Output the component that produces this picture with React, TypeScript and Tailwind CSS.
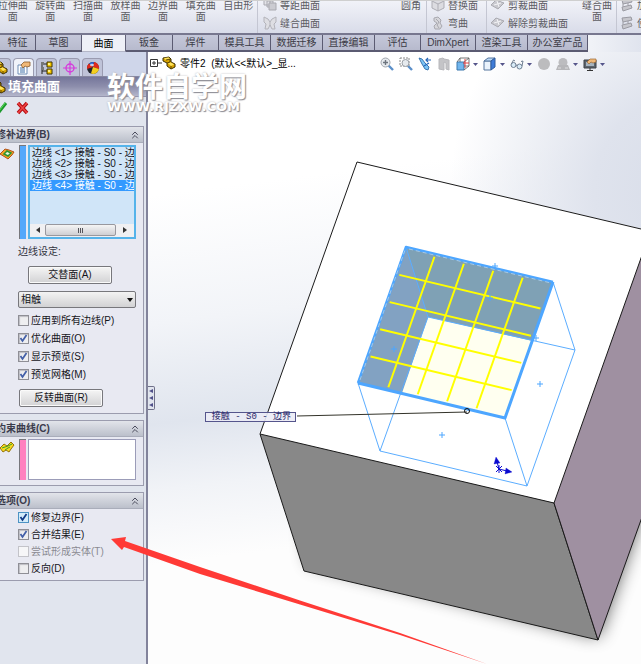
import { useState, type ReactNode } from "react";
import { ChevronsUp } from "lucide-react";
import clsx from "clsx";

const largeTools = [
  ["拉伸曲", "面"],
  ["旋转曲", "面"],
  ["扫描曲", "面"],
  ["放样曲", "面"],
  ["边界曲", "面"],
  ["填充曲", "面"],
  ["自由形", ""],
];

const commandTabs = [
  { label: "特征", width: "w-[36px]" },
  { label: "草图", width: "w-[46px]" },
  { label: "曲面", width: "w-[44px]" },
  { label: "钣金", width: "w-[47px]" },
  { label: "焊件", width: "w-[46px]" },
  { label: "模具工具", width: "w-[52px]" },
  { label: "数据迁移", width: "w-[52px]" },
  { label: "直接编辑", width: "w-[52px]" },
  { label: "评估", width: "w-[46px]" },
  { label: "DimXpert", width: "w-[55px]" },
  { label: "渲染工具", width: "w-[52px]" },
  { label: "办公室产品", width: "w-[60px]" },
];

const edges = [1, 2, 3, 4].map((n) => `边线 <${n}> 接触 - S0 - 边界`);

function SmallTool({ icon, label }: { icon: ReactNode; label: string }) {
  return (
    <button type="button" className="flex h-[18px] items-center gap-[3px] whitespace-nowrap">
      {icon}
      {label}
    </button>
  );
}

function OffsetIcon() {
  return (
    <svg viewBox="0 0 14 14" className="size-[14px] shrink-0" fill="#e3e3e8" stroke="#a9a9b0">
      <path d="M1 1h6v6H1zM4 3h6v6H4z" />
      <path d="M6 5h7v7H6z" fill="#cbcbd1" />
    </svg>
  );
}

function KnitIcon() {
  return (
    <svg viewBox="0 0 14 14" className="size-[14px] shrink-0" fill="#dedee3" stroke="#b3b3ba">
      <path d="M1 1l4 2 2 3 2-3 4-2v5l-2 2 1 5H9L7 9l-2 4H2l1-5-2-2z" />
      <path d="M7 6v4" />
    </svg>
  );
}

function ReplaceIcon() {
  return (
    <svg viewBox="0 0 14 14" className="size-[14px] shrink-0" fill="#dcdce1" stroke="#adadb4">
      <path d="M1 3l6-2 6 2v7l-6 3-6-3z" />
      <path d="M1 3l6 3 6-3M7 6v7" />
    </svg>
  );
}

function FlexIcon() {
  return (
    <svg viewBox="0 0 14 14" className="size-[14px] shrink-0" fill="#d6d6db" stroke="#a8a8af">
      <path d="M3 2l4-1 3 3-1 3 2 3-2 3H4l-1-3 3-3-3-2z" />
      <path d="M5 3l3 3-2 3 2 3" fill="none" />
    </svg>
  );
}

function TrimIcon() {
  return (
    <svg viewBox="0 0 14 14" className="size-[14px] shrink-0" fill="#c9c9cf" stroke="#aaaab1">
      <path d="M0 7l5-5 8 3-6 6z" />
      <path d="M3 7l7-2M6 3l2 6" stroke="#f3f3f6" />
    </svg>
  );
}

function ThickenIcon() {
  return (
    <svg viewBox="0 0 14 14" className="size-[14px] shrink-0" fill="#c6c6cc" stroke="#9a9aa2">
      <path d="M2 2l9-1 1 3-9 2zM2 9l9-2 1 3-9 3z" />
      <path d="M3 6v2M8 5v2" />
    </svg>
  );
}

function Ribbon() {
  return (
    <header className="flex h-[35px] shrink-0 overflow-hidden border-b-2 border-t border-b-[#77778f] border-t-[#cfcfcf] bg-linear-to-b from-[#f1f2f8] to-[#d9dce9] text-[10px] text-[#5d5d63]">
      <div className="-ml-[6px] -mt-px flex w-[263px] shrink-0">
        {largeTools.map(([first, second]) => (
          <button key={first} type="button" className="flex flex-1 flex-col items-center leading-[11px]">
            <span>{first}</span>
            <span>{second}</span>
          </button>
        ))}
      </div>
      <div className="-mt-[5px] flex w-[169px] shrink-0 justify-between border-l border-[#c4c6d2] pl-[5px] pr-[5px]">
        <div>
          <SmallTool icon={<OffsetIcon />} label="等距曲面" />
          <SmallTool icon={<KnitIcon />} label="缝合曲面" />
        </div>
        <button type="button" className="h-[18px]">
          圆角
        </button>
      </div>
      <div className="-mt-[5px] w-[60px] shrink-0 border-l border-[#c4c6d2] pl-1">
        <SmallTool icon={<ReplaceIcon />} label="替换面" />
        <SmallTool icon={<FlexIcon />} label="弯曲" />
      </div>
      <div className="flex w-[130px] shrink-0 justify-between border-l border-[#c4c6d2] pl-1 pr-1">
        <div className="-mt-[5px]">
          <SmallTool icon={<TrimIcon />} label="剪裁曲面" />
          <SmallTool icon={<TrimIcon />} label="解除剪裁曲面" />
        </div>
        <button type="button" className="-mt-px flex flex-col items-center leading-[11px]">
          <span>缝合曲</span>
          <span>面</span>
        </button>
      </div>
      <div className="-mt-[5px] border-l border-[#c4c6d2] pl-[3px]">
        <SmallTool icon={<ThickenIcon />} label="加厚" />
        <SmallTool icon={<ThickenIcon />} label="使用曲面" />
      </div>
    </header>
  );
}

function CommandTabs() {
  const [active, setActive] = useState("曲面");

  return (
    <nav className="flex h-[17px] shrink-0 bg-linear-to-r from-white from-85% to-[#e0e4ee]">
      {commandTabs.map(({ label, width }) => (
        <button
          key={label}
          type="button"
          onClick={() => setActive(label)}
          className={clsx(
            "shrink-0 whitespace-nowrap border-r text-center text-[10px] leading-[15px]",
            width,
            active === label
              ? "border-b border-r-[#63637a] border-b-[#b4b7c8] bg-[#eef0f7] text-black"
              : "border-b-2 border-[#5b5b72] bg-linear-to-b from-[#c5c8da] to-[#b7bacd] text-[#3c3c46]",
          )}
        >
          {label}
        </button>
      ))}
    </nav>
  );
}

function PartIcon() {
  return (
    <svg viewBox="0 0 14 14" className="size-[14px] shrink-0" strokeLinejoin="round">
      <path d="M1 2l6-1 2 2v3l4 2v3l-4 2-4-3V7L1 5z" fill="#d9a400" stroke="#3d2f00" />
      <path d="M2 2l5-.5 1 1.500-4 1z" fill="#ffe45c" />
      <path d="M6 7l3-.5 3 2-3 1.500z" fill="#ffe45c" />
      <path d="M4 4l4-1v3l-3 1M9 10v2" fill="none" stroke="#3d2f00" strokeWidth=".8" />
    </svg>
  );
}

const managerTabs = [
  { name: "FeatureManager", icon: <PartIcon /> },
  {
    name: "PropertyManager",
    icon: (
      <svg viewBox="0 0 14 14" className="size-[14px]">
        <path d="M1 4h9v9H1z" fill="#fff" stroke="#6f8db5" />
        <path d="M3 7h5M3 9h5M3 11h5" stroke="#3c6ea8" />
        <path d="M4 4l3-3h6v4l-3 1-2-1-2 2z" fill="#f0b878" stroke="#8b5a2a" strokeWidth=".8" />
      </svg>
    ),
  },
  {
    name: "ConfigurationManager",
    icon: (
      <svg viewBox="0 0 14 14" className="size-[14px]">
        <path d="M2 1v12M2 3h5M2 10h5" stroke="#222" fill="none" />
        <path d="M1 1h3v3H1zM1 6h3v3H1z" fill="#777" />
        <path d="M7 1h5v5H7zM7 8h5v5H7z" fill="#f2c600" stroke="#3f3200" />
        <path d="M8 2h2v2H8zM8 9h2v2H8z" fill="#fff08a" />
      </svg>
    ),
  },
  {
    name: "DimXpertManager",
    icon: (
      <svg viewBox="0 0 14 14" className="size-[14px]" fill="none" stroke="#d63bdc">
        <circle cx="7" cy="7" r="4" strokeWidth="1.400" />
        <path d="M7 0v14M0 7h14" strokeWidth="1.200" />
      </svg>
    ),
  },
  {
    name: "DisplayManager",
    icon: (
      <svg viewBox="0 0 14 14" className="size-[14px]">
        <circle cx="7" cy="7" r="6" fill="#23272f" />
        <path d="M7 6L3 2.500A6 6 0 0 1 8 1z" fill="#2464d8" />
        <path d="M7 6l1-5a6 6 0 0 1 5 7z" fill="#e02a1c" />
        <path d="M7 6l6 2a6 6 0 0 1-8 4.600z" fill="#f5cf1e" />
        <path d="M7 6L1 8a6 6 0 0 1 2-5.500z" fill="#e02a1c" />
        <ellipse cx="6" cy="4" rx="2" ry="1.300" fill="#fff" opacity=".7" />
      </svg>
    ),
  },
];

interface SectionProps {
  title: string;
  children: ReactNode;
}

function Section({ title, children }: SectionProps) {
  const [open, setOpen] = useState(true);

  return (
    <section className="border-b border-r border-[#9b9cae] bg-[#e8e9f2]">
      <h2>
        <button
          type="button"
          onClick={() => setOpen(!open)}
          className="flex h-[17px] w-full items-center justify-between border-b border-t border-b-[#a9adba] border-t-[#9b9cae] bg-linear-to-b from-[#e2e4ea] to-[#bcc0cb] pl-[2px] pr-[2px] text-[10px] font-bold text-[#3a3b4c]"
        >
          {title}
          <ChevronsUp className="size-[12px] text-[#4a4b5c]" />
        </button>
      </h2>
      {open && children}
    </section>
  );
}

interface CheckFieldProps {
  label: string;
  defaultChecked?: boolean;
  disabled?: boolean;
  highlighted?: boolean;
}

function CheckField({ label, defaultChecked, disabled, highlighted }: CheckFieldProps) {
  return (
    <label className={clsx("flex h-[17px] items-center gap-[2px] whitespace-nowrap", disabled && "text-[#8b8b93]")}>
      <span className="grid size-[11px] shrink-0">
        <input
          type="checkbox"
          defaultChecked={defaultChecked}
          disabled={disabled}
          className={clsx(
            "peer col-start-1 row-start-1 size-[11px] appearance-none border",
            disabled && "border-[#c3c3c9] bg-[#f6f6f8]",
            !disabled && highlighted && "border-[#4d93c4] bg-[#d3ecfa]",
            !disabled && !highlighted && "border-[#8f8f96] bg-[#eeeef0] shadow-[inset_1px_1px_1px_#bdbdc4]",
          )}
        />
        <svg
          viewBox="0 0 11 11"
          className="pointer-events-none invisible col-start-1 row-start-1 size-[11px] peer-checked:visible"
          fill="none"
          stroke={highlighted ? "#123a86" : "#4460a8"}
          strokeWidth="1.800"
        >
          <path d="M2.500 5l2 3 4-6" />
        </svg>
      </span>
      {label}
    </label>
  );
}

function PanelButton({ children }: { children: ReactNode }) {
  return (
    <button
      type="button"
      className="block h-[18px] w-[84px] rounded-xs border border-[#77777c] bg-linear-to-b from-[#f5f5f5] to-[#d2d2d4] text-center leading-[16px] shadow-[inset_0_0_0_1px_#fafafa]"
    >
      {children}
    </button>
  );
}

function PropertyPanel() {
  const [selected, setSelected] = useState(3);

  return (
    <aside className="w-[148px] shrink-0 overflow-hidden border-r-2 border-[#82839b] bg-[#e1e5ee] text-[10px] text-[#15151b]">
      <div className="flex h-[25px] items-end gap-[2px] border-b border-[#8687a0] bg-[#cfd6ea]">
        {managerTabs.map(({ name, icon }, i) => (
          <button
            key={name}
            type="button"
            aria-label={name}
            className={clsx(
              "flex h-[18px] w-[21px] shrink-0 items-center justify-center rounded-t-sm border border-b-0 border-[#9a9bb0]",
              i === 0 && "-ml-[10px]",
              i === 1 ? "bg-[#f1f3fa]" : "bg-[#bfc3d8]",
            )}
          >
            {icon}
          </button>
        ))}
      </div>

      <h1 className="-ml-[8px] flex h-[20px] items-center gap-[2px] border-b border-[#9596ae] bg-linear-to-b from-[#75769a] via-[#8d8eac] to-[#b4b6cb] text-[13px] font-bold text-white">
        <PartIcon />
        填充曲面
      </h1>

      <div className="-ml-[6px] flex h-[29px] items-start gap-[8px] pt-1">
        <button type="button" aria-label="确定">
          <svg viewBox="0 0 14 14" className="size-[14px]" fill="none" stroke="#1c9a2c" strokeWidth="3">
            <path d="M1 7l4 4 7-9" />
            <path d="M2 7l3 3 6-8" stroke="#5edc58" strokeWidth="1" />
          </svg>
        </button>
        <button type="button" aria-label="取消">
          <svg viewBox="0 0 14 14" className="size-[14px]" fill="none" stroke="#b40f14" strokeWidth="3.500">
            <path d="M2 2l9 10M11 2L2 12" />
            <path d="M2 2l9 10M11 2L2 12" stroke="#ef4444" strokeWidth="1.500" />
          </svg>
        </button>
      </div>

      <div className="-ml-[6px] mr-[2px] flex flex-col gap-[6px]">
        <Section title="修补边界(B)">
          <div className="flex pb-1 pl-[6px] pr-[7px] pt-[2px]">
            <svg viewBox="0 0 15 14" className="mt-[2px] h-[14px] w-[15px] shrink-0">
              <path d="M0 7l5-5 4 1 5 2-2 3-4 4-3-2z" fill="#f4a321" stroke="#b2541b" />
              <path d="M4 7l3-3 4 2-3 3z" fill="#e9f6d9" stroke="#2e9430" strokeWidth="1.500" />
            </svg>
            <span className="ml-[4px] w-[7px] shrink-0 border-l border-t border-[#77777c] bg-[#55a8fb]" />
            <div className="ml-[2px] flex h-[94px] min-w-0 flex-1 flex-col border-2 border-[#55b3ea] bg-[#d0e5f8]">
              <ul role="listbox" aria-label="修补边界" className="flex-1 overflow-hidden">
                {edges.map((edge, i) => (
                  <li
                    key={edge}
                    role="option"
                    aria-selected={selected === i}
                    onClick={() => setSelected(i)}
                    className={clsx(
                      "overflow-hidden whitespace-nowrap pl-[2px] leading-[11px]",
                      selected === i && "bg-[#3399ff] text-white",
                    )}
                  >
                    {edge}
                  </li>
                ))}
              </ul>
              <div className="flex h-[13px] items-stretch bg-[#f0f0f2] pb-px">
                <button type="button" aria-label="向左滚动" className="flex w-[15px] items-center justify-center">
                  <svg viewBox="0 0 4 6" className="h-[6px] w-[4px]">
                    <path d="M4 0v6L0 3z" fill="#333" />
                  </svg>
                </button>
                <span className="flex flex-1 items-center justify-center gap-px rounded-xs border border-[#98989e] bg-linear-to-b from-[#f5f5f5] to-[#cfcfd3]">
                  <i className="h-[5px] w-px bg-[#55555b]" />
                  <i className="h-[5px] w-px bg-[#55555b]" />
                  <i className="h-[5px] w-px bg-[#55555b]" />
                </span>
                <button type="button" aria-label="向右滚动" className="flex w-[18px] items-center justify-center">
                  <svg viewBox="0 0 4 6" className="h-[6px] w-[4px]">
                    <path d="M0 0v6l4-3z" fill="#333" />
                  </svg>
                </button>
              </div>
            </div>
          </div>

          <div className="pb-[6px] pl-[24px] pr-[7px]">
            <label htmlFor="edge-setting" className="block h-[23px] leading-[18px] text-[#33343f]">
              边线设定:
            </label>
            <div className="pl-[10px]">
              <PanelButton>交替面(A)</PanelButton>
            </div>
            <div className="mt-[7px] grid">
              <select
                id="edge-setting"
                className="col-start-1 row-start-1 h-[17px] w-full appearance-none rounded-xs border border-[#77777c] bg-linear-to-b from-[#f3f3f3] to-[#d2d2d4] pl-[2px] leading-[15px]"
              >
                <option>相触</option>
                <option>相切</option>
                <option>曲率</option>
              </select>
              <svg
                viewBox="0 0 6 4"
                className="pointer-events-none col-start-1 row-start-1 mr-[3px] h-[4px] w-[6px] place-self-center justify-self-end"
              >
                <path d="M0 0h6L3 4z" fill="#111" />
              </svg>
            </div>
            <div className="mt-[4px] flex flex-col gap-px">
              <CheckField label="应用到所有边线(P)" />
              <CheckField label="优化曲面(O)" defaultChecked />
              <CheckField label="显示预览(S)" defaultChecked />
              <CheckField label="预览网格(M)" defaultChecked />
            </div>
            <div className="mt-[6px] pl-px">
              <PanelButton>反转曲面(R)</PanelButton>
            </div>
          </div>
        </Section>

        <Section title="约束曲线(C)">
          <div className="flex pb-[5px] pl-[6px] pr-[7px] pt-[2px]">
            <svg viewBox="0 0 15 14" className="mt-px h-[14px] w-[15px] shrink-0">
              <path d="M0 8l4-4 3 2 4-4 3 3-3 4-2 3-3-2-3 2z" fill="#f6d81f" stroke="#95730c" />
              <path d="M2 8l3-1 3-1 4-2M5 10l3-2 2-1" fill="none" stroke="#3ba12c" />
            </svg>
            <span className="ml-[4px] w-[7px] shrink-0 border-l border-t border-[#77777c] bg-[#ff80c0]" />
            <ul
              role="listbox"
              aria-label="约束曲线"
              className="ml-[2px] h-[41px] flex-1 border border-[#9b9cb8] bg-white"
            />
          </div>
        </Section>

        <Section title="选项(O)">
          <div className="flex flex-col pb-[3px] pl-[24px]">
            <CheckField label="修复边界(F)" defaultChecked highlighted />
            <CheckField label="合并结果(E)" defaultChecked />
            <CheckField label="尝试形成实体(T)" disabled />
            <CheckField label="反向(D)" />
          </div>
        </Section>
      </div>
    </aside>
  );
}

function Caret() {
  return (
    <svg viewBox="0 0 5 3" className="h-[3px] w-[5px]">
      <path d="M0 0h5L2.500 3z" fill="#55558a" />
    </svg>
  );
}

const viewTools = [
  {
    name: "整屏显示全图",
    menu: false,
    icon: (
      <>
        <path d="M8.500 8.500l4.500 4.500" stroke="#5b8fc9" strokeWidth="2.400" />
        <circle cx="5.500" cy="5.500" r="4.500" fill="#e6eaee" stroke="#a2a7ae" />
        <path d="M5.500 3v5M3 5.500h5" stroke="#6d757e" strokeWidth="1.400" />
      </>
    ),
  },
  {
    name: "局部放大",
    menu: false,
    icon: (
      <>
        <path d="M9 9l4 4" stroke="#5b8fc9" strokeWidth="2.400" />
        <path d="M1 1h9v8H1z" fill="none" stroke="#888" strokeDasharray="2 1" />
        <circle cx="6.500" cy="6" r="3.500" fill="#e6eaee" stroke="#9a9fa6" />
      </>
    ),
  },
  {
    name: "上一视图",
    menu: false,
    icon: (
      <>
        <path d="M1 1l3 1 3 4 4 4-1 3-3-1-3-5z" fill="#7cc4f5" stroke="#2c6ba8" strokeWidth=".9" />
        <path d="M13 3H8M10 1L8 3l2 2M6 9l5-3" fill="none" stroke="#2566b8" strokeWidth="1.200" />
      </>
    ),
  },
  {
    name: "剖面视图",
    menu: false,
    icon: <path d="M2 2l4-1 1 1 5 1v10l-3-1V6L7 5v8l-5-1z" fill="#c4c4c7" stroke="#b8b8bc" />,
  },
  {
    name: "视图定向",
    menu: true,
    icon: (
      <>
        <path d="M4 1h9v8H4z" fill="#fff" stroke="#777" />
        <path d="M1 5h7v8H1z" fill="#71b6ee" stroke="#3c78ad" />
        <path d="M1 5l3-4M8 13l5-4M8 5l5-4" stroke="#555" strokeWidth=".8" />
        <path d="M9 2v9M7 6h6" stroke="#df4343" />
      </>
    ),
  },
  {
    name: "显示样式",
    menu: true,
    icon: (
      <>
        <path d="M1 4h7v9H1z" fill="#eaf3fc" stroke="#57769e" />
        <path d="M1 4l4-3h7L8 4z" fill="#bcd9f6" stroke="#57769e" />
        <path d="M8 4l4-3v9l-4 3z" fill="#3f7cd8" stroke="#315c9c" />
      </>
    ),
  },
  {
    name: "隐藏/显示项目",
    menu: true,
    icon: (
      <g fill="#d9ecf8" stroke="#6f7f92">
        <circle cx="3.500" cy="8" r="2.500" />
        <circle cx="9.500" cy="9.500" r="2.500" />
        <path d="M1.500 7l2-4 1.500 1M12 9l1-5-2 .5M6 8l1 .5" fill="none" />
      </g>
    ),
  },
  {
    name: "编辑外观",
    menu: false,
    icon: <circle cx="7" cy="7" r="6" fill="#bcbcbe" />,
  },
  {
    name: "应用布景",
    menu: true,
    icon: (
      <>
        <circle cx="7" cy="5.500" r="4.500" fill="#bcbcbf" />
        <path d="M0 13l2-5h10l2 5z" fill="#b6b6b9" />
        <path d="M2 11h3M9 11h3" stroke="#dedee0" />
      </>
    ),
  },
  {
    name: "视图设定",
    menu: true,
    icon: (
      <>
        <path d="M1 3h12v8H1z" fill="#5d646c" stroke="#3c4046" />
        <path d="M3 5h8v4H3z" fill="#a6b3be" />
        <path d="M7 11v2M4 13.500h6" stroke="#333" />
        <path d="M4 5l3-3h6v3l-3 1-2-1-2 2z" fill="#f0b878" stroke="#9b6934" strokeWidth=".7" />
      </>
    ),
  },
];

// Corners of the filled patch, clockwise from the top left.
const patch = [
  [406, 247],
  [553, 282],
  [505, 418],
  [358, 383],
];

function between(a: number[], b: number[], t: number) {
  return [a[0] + (b[0] - a[0]) * t, a[1] + (b[1] - a[1]) * t];
}

function MeshLines() {
  const [a, b, c, d] = patch;
  const steps = [0.2, 0.4, 0.6, 0.8];
  const lines = steps.flatMap((t) => [
    [between(a, b, t), between(d, c, t)],
    [between(a, d, t), between(b, c, t)],
  ]);

  return (
    <g stroke="#ffff00" strokeWidth="2">
      {lines.map(([from, to], i) => {
        const start = between(from, to, 0.02);
        const end = between(from, to, 0.98);
        return <line key={i} x1={start[0]} y1={start[1]} x2={end[0]} y2={end[1]} />;
      })}
    </g>
  );
}

function Model() {
  return (
    <svg
      viewBox="148 52 493 612"
      preserveAspectRatio="xMinYMin slice"
      className="absolute inset-0 size-full"
      fill="none"
    >
      <defs>
        <linearGradient id="haze" gradientUnits="userSpaceOnUse" x1="190" y1="190" x2="235" y2="555">
          <stop offset="0" stopColor="#fff" />
          <stop offset=".35" stopColor="#f2f4f8" />
          <stop offset=".62" stopColor="#e0e5ee" />
          <stop offset=".8" stopColor="#f1f3f7" />
          <stop offset="1" stopColor="#fdfdfd" />
        </linearGradient>
        <radialGradient id="corner" gradientUnits="userSpaceOnUse" cx="690" cy="190" r="240">
          <stop offset="0" stopColor="#d8dde9" />
          <stop offset=".4" stopColor="#dfe3ed" />
          <stop offset="1" stopColor="#dfe3ed" stopOpacity="0" />
        </radialGradient>
        <filter id="soft" x="-20%" y="-20%" width="140%" height="140%">
          <feGaussianBlur stdDeviation="9" />
        </filter>
      </defs>

      <rect x="148" y="52" width="493" height="612" fill="url(#haze)" />
      <rect x="148" y="52" width="493" height="612" fill="url(#corner)" />
      <path d="M310 562L598 636 642 512V480H304z" fill="#000" opacity=".7" filter="url(#soft)" />

      <g stroke="#1a1a1a" strokeLinejoin="round">
        <path d="M357 162L680 238 554 503 260 434z" fill="#fff" stroke="none" />
        <path d="M260 434L554 503 598 640 304 571z" fill="#888888" />
        <path d="M554 503L646 244V506L598 640z" fill="#9f90a1" />
        <path d="M641 229L357 162 260 434" />
      </g>

      <path d="M406 247L553 282 505 418 358 383z" fill="#7fa1b5" />
      <path d="M406 247L428 317 402 393 358 383z" fill="#82a2c2" />
      <path d="M428 317L533 341 505 418 402 393z" fill="#fffff0" />

      <g stroke="#5badff">
        <path d="M406 247L428 317 575 350M428 317L380 451" />
        <path d="M358 383L380 451 527 486 505 418M553 282L575 350 527 486" />
      </g>
      <MeshLines />
      <g stroke="#4da6ff" strokeLinejoin="round">
        <path d="M358 383L406 247 553 282" strokeWidth="2.500" />
        <path d="M553 282L505 418 358 383" strokeWidth="3" />
        <path d="M492 266h6m-3-3v6M533 338h6m-3-3v6M537 384h6m-3-3v6M439 435h6m-3-3v6M391 349h6m-3-3v6M487 298h6m-3-3v6" />
      </g>
      <path d="M409 249L551 283M360 380L405 250" stroke="#a6c9e6" strokeDasharray="4 3" />

      <path d="M297 416L467 412" stroke="#33332a" />
      <circle cx="467" cy="411" r="2.500" stroke="#111" />

      <g stroke="#0a0ad0">
        <path d="M499 469l-2-7M499 469l8 2M496 466l6 6M502 466l-6 6M499 465v8" />
        <path d="M496 457l4 6-6 1zM512 472l-7 2 1-6z" fill="#0a0ad0" strokeWidth=".3" />
      </g>
    </svg>
  );
}

function Viewport() {
  return (
    <main className="relative min-w-0 flex-1 overflow-hidden">
      <Model />

      <div className="relative flex items-start pl-[2px] pt-[4px]">
        <div className="flex h-[14px] items-center gap-[4px] whitespace-pre text-[10px] text-black">
          <span className="flex items-center">
            <button type="button" aria-label="展开">
              <svg viewBox="0 0 12 8" className="h-[8px] w-[12px]" fill="none" stroke="#333">
                <path d="M.5.5h7v7h-7zM2 4h4M4 2v4M8 4h4" />
              </svg>
            </button>
            <PartIcon />
          </span>
          零件2{"  "}(默认&lt;&lt;默认&gt;_显...
        </div>
        <div className="ml-auto mr-[36px] flex gap-[5px] pt-px">
          {viewTools.map(({ name, menu, icon }) => (
            <button key={name} type="button" aria-label={name} className="flex items-center gap-[3px]">
              <svg viewBox="0 0 14 14" className="size-[14px]" fill="none">
                {icon}
              </svg>
              {menu && <Caret />}
            </button>
          ))}
        </div>
      </div>

      <button
        type="button"
        aria-label="收起面板"
        className="absolute left-0 top-[334px] flex h-[24px] w-[7px] flex-col items-center justify-around rounded-r-xs border border-l-0 border-[#6f7089] bg-[#e1e5ee]"
      >
        {[0, 1, 2].map((i) => (
          <svg key={i} viewBox="0 0 4 4" className="size-[4px]">
            <path d="M4 0v4L0 2z" fill="#50518a" />
          </svg>
        ))}
      </button>

      <div className="absolute left-[57px] top-[360px] h-[10px] w-[91px] whitespace-nowrap border border-[#55558c] bg-[#ebebf5]/90 pr-[4px] text-right font-['Liberation_Mono','Noto_Sans_CJK_SC',monospace] text-[9px] leading-[8px] text-[#2a2a6a]">
        接触 - S0 - 边界
      </div>
    </main>
  );
}

export default function App() {
  return (
    <div className="relative flex min-h-screen flex-col overflow-hidden bg-white font-['Liberation_Sans','Noto_Sans_CJK_SC',sans-serif]">
      <Ribbon />
      <CommandTabs />
      <div className="flex flex-1">
        <PropertyPanel />
        <Viewport />
      </div>

      <div className="pointer-events-none absolute left-[107px] top-[75px] whitespace-nowrap font-bold text-white [text-shadow:1px_1px_1px_#8b8b93,0_0_2px_#b5b5ba]">
        <p className="text-[28px] leading-[26px]">软件自学网</p>
        <p className="font-['DejaVu_Sans',sans-serif] text-[13px] leading-[12px]">WWW.RJZXW.COM</p>
      </div>

      <svg viewBox="0 0 641 664" className="pointer-events-none absolute left-0 top-0 h-[664px] w-[641px]">
        <path
          d="M111 539L126 537 125 541 200 567 300 600.500 400 633 487 664 400 635 300 604.500 200 574 124 547 122 550z"
          fill="#ff3a36"
        />
      </svg>
    </div>
  );
}
